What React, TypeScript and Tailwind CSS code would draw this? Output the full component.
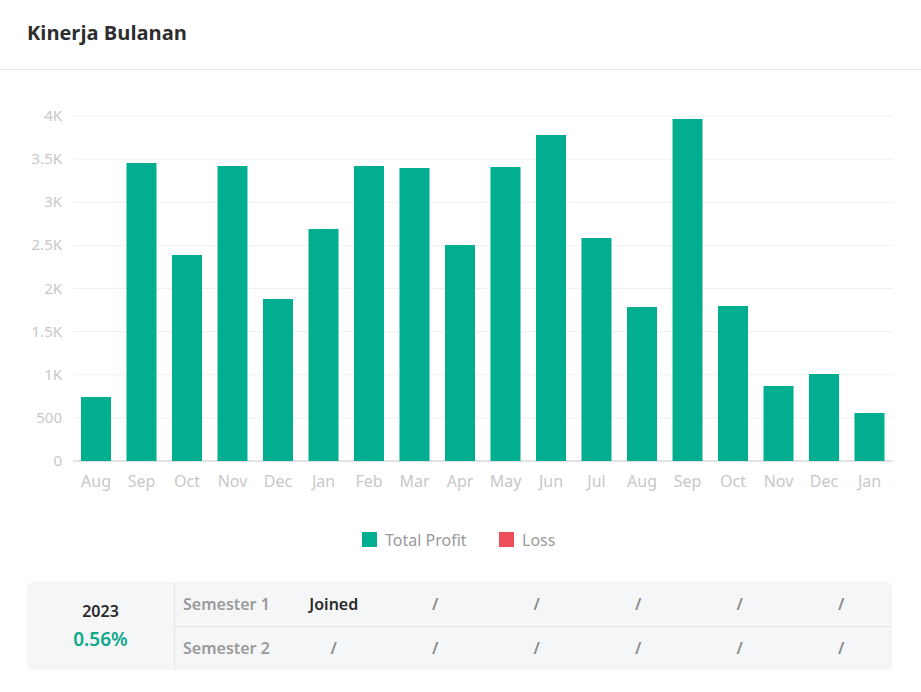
import React from "react";

const months = ["Aug","Sep","Oct","Nov","Dec","Jan","Feb","Mar","Apr","May","Jun","Jul","Aug","Sep","Oct","Nov","Dec","Jan"];
const tops = [397,163,255,166,299,229,166,168,245,167,135,238,307,119,306,386,374,413];
const yl = ["4K","3.5K","3K","2.5K","2K","1.5K","1K","500","0"];

export default function App() {
  const base = 461;
  return (
    <div className="w-[921px] h-[692px] bg-white" style={{ fontFamily: "'Open Sans', 'Noto Sans', sans-serif" }}>
      <div className="h-[70px] border-b border-[#e5e7eb] flex items-center px-[27px]">
        <h1 className="text-[20px] font-bold text-[#2d2d2d] -mt-[4px]">Kinerja Bulanan</h1>
      </div>
      <svg width="921" height="500" viewBox="0 70 921 500" className="block" style={{ fontFamily: "'Noto Sans', sans-serif" }}>
        {yl.map((l, i) => {
          const y = 116 + i * 43.125;
          return (
            <g key={i}>
              {i < 8 && <line x1="73" x2="893" y1={y} y2={y} stroke="#f1f1f1" strokeWidth="1" />}
              <text x="62" y={y + 5} textAnchor="end" fontSize="15" fill="#c8c8c8">{l}</text>
            </g>
          );
        })}
        <line x1="73" x2="893" y1={base} y2={base} stroke="#d8d8d8" strokeWidth="1.5" />
        {months.map((m, i) => {
          const cx = 96 + i * 45.5;
          return (
            <g key={i}>
              <rect x={cx - 15} y={tops[i]} width="30" height={base - tops[i]} fill="#01ae8f" />
              <text x={cx} y="487" textAnchor="middle" fontSize="16" fill="#c8c8c8">{m}</text>
            </g>
          );
        })}
        <rect x="362" y="532" width="15" height="15" fill="#01ae8f" />
        <text x="385" y="546" fontSize="16" fill="#9a9a9a">Total Profit</text>
        <rect x="499" y="532" width="15" height="15" fill="#ee4d5a" />
        <text x="522" y="546" fontSize="16" fill="#9a9a9a">Loss</text>
      </svg>
      <div className="mx-[27px] mt-[12px] w-[865px] h-[88px] bg-[#f4f6f7] rounded-[6px] flex" style={{ fontFamily: "'Noto Sans', sans-serif" }}>
        <div className="w-[148px] border-r border-[#e3e5e7] flex flex-col items-center justify-center">
          <div className="text-[16px] font-semibold text-[#2a2a2a]">2023</div>
          <div className="text-[19px] font-semibold text-[#10a88a] mt-[2px]">0.56%</div>
        </div>
        <div className="flex-1 flex flex-col">
          {[["Joined","/","/","/","/","/"],["/","/","/","/","/","/"]].map((row, r) => (
            <div key={r} className={`flex-1 flex items-center text-[16px] ${r === 0 ? "border-b border-[#e3e5e7]" : ""}`}>
              <div className="w-[108px] pl-[8px] font-semibold text-[#9a9a9a]">Semester {r + 1}</div>
              {row.map((c, i) => (
                <div key={i} className={`w-[101.5px] text-center font-semibold ${c === "Joined" ? "text-[#2a2a2a]" : "text-[#8a8a8a]"}`}>{c}</div>
              ))}
            </div>
          ))}
        </div>
      </div>
    </div>
  );
}
